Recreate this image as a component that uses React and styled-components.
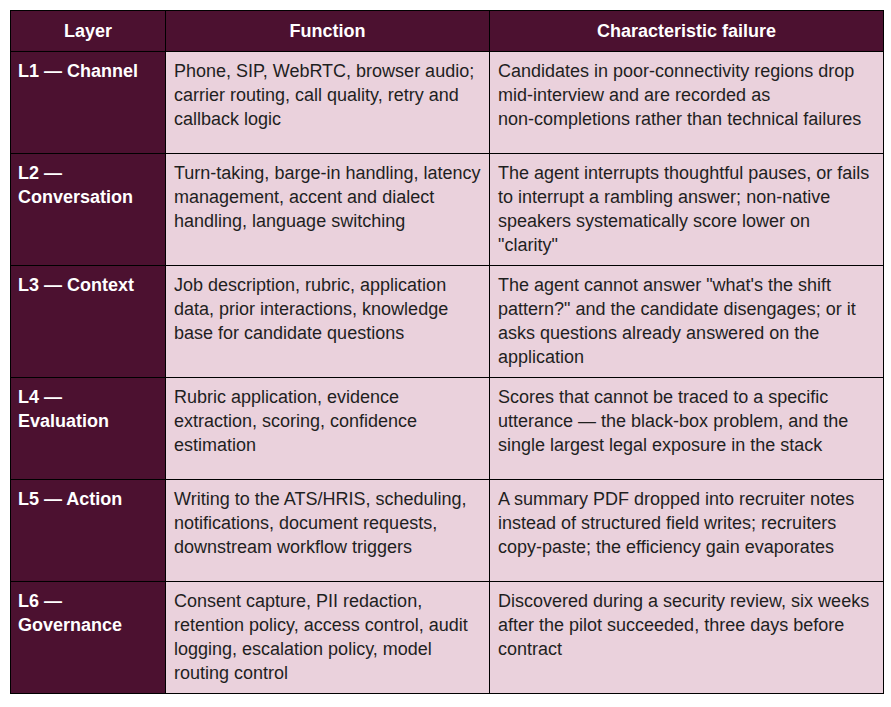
import React from "react"
import styled, { createGlobalStyle } from "styled-components"

const theme = {
    dark: "#4c1130",
    pale: "#ead1dc",
    line: "#000000",
    ink: "#1f1f1f",
}

const GlobalStyle = createGlobalStyle`
    body {
        margin: 0;
        background: #ffffff;
        font-family: "Liberation Sans", Arial, sans-serif;
    }
`

const Page = styled.div`
    padding: 10px;
`

const Table = styled.table`
    border-collapse: collapse;
    table-layout: fixed;
    width: 873px;
    font-size: 18px;
    line-height: 24px;
`

const Col = styled.col`
    width: ${p => p.$width}px;
`

const HeadCell = styled.th`
    background: ${theme.dark};
    color: #ffffff;
    font-weight: bold;
    text-align: center;
    padding: 8px;
    border: 1px solid ${theme.line};
`

const LayerCell = styled.td`
    background: ${theme.dark};
    color: #ffffff;
    font-weight: bold;
    vertical-align: top;
    padding: 7px 7px 8px 7px;
    border: 1px solid ${theme.line};
    height: 86px;
`

const Cell = styled.td`
    background: ${theme.pale};
    color: ${theme.ink};
    vertical-align: top;
    padding: 7px ${p => p.$padRight || 7}px 8px 8px;
    border: 1px solid ${theme.line};
`

// hyphenated words stay on one line, as in the doc export
const Word = styled.span`
    white-space: nowrap;
`

const Text = ({ children }) =>
    children.split(/(\S*-\S*)/).map((part, i) =>
        part.includes("-") ? <Word key={i}>{part}</Word> : part
    )

const rows = [
    {
        layer: "L1 — Channel",
        fn: "Phone, SIP, WebRTC, browser audio; carrier routing, call quality, retry and callback logic",
        fail: "Candidates in poor-connectivity regions drop mid-interview and are recorded as non-completions rather than technical failures",
    },
    {
        layer: "L2 — Conversation",
        fn: "Turn-taking, barge-in handling, latency management, accent and dialect handling, language switching",
        fail: "The agent interrupts thoughtful pauses, or fails to interrupt a rambling answer; non-native speakers systematically score lower on \"clarity\"",
    },
    {
        layer: "L3 — Context",
        fn: "Job description, rubric, application data, prior interactions, knowledge base for candidate questions",
        fail: "The agent cannot answer \"what's the shift pattern?\" and the candidate disengages; or it asks questions already answered on the application",
    },
    {
        layer: "L4 — Evaluation",
        fn: "Rubric application, evidence extraction, scoring, confidence estimation",
        fail: "Scores that cannot be traced to a specific utterance — the black-box problem, and the single largest legal exposure in the stack",
    },
    {
        layer: "L5 — Action",
        fn: "Writing to the ATS/HRIS, scheduling, notifications, document requests, downstream workflow triggers",
        fail: "A summary PDF dropped into recruiter notes instead of structured field writes; recruiters copy-paste; the efficiency gain evaporates",
    },
    {
        layer: "L6 — Governance",
        fn: "Consent capture, PII redaction, retention policy, access control, audit logging, escalation policy, model routing control",
        fail: "Discovered during a security review, six weeks after the pilot succeeded, three days before contract",
    },
]

const App = () =>
    <Page>
        <GlobalStyle />
        <Table>
            <colgroup>
                <Col $width={155} />
                <Col $width={324} />
                <Col $width={394} />
            </colgroup>
            <thead>
                <tr>
                    <HeadCell>Layer</HeadCell>
                    <HeadCell>Function</HeadCell>
                    <HeadCell>Characteristic failure</HeadCell>
                </tr>
            </thead>
            <tbody>
                {rows.map(row =>
                    <tr key={row.layer}>
                        <LayerCell>{row.layer}</LayerCell>
                        <Cell><Text>{row.fn}</Text></Cell>
                        <Cell $padRight={12}><Text>{row.fail}</Text></Cell>
                    </tr>
                )}
            </tbody>
        </Table>
    </Page>

export default App
